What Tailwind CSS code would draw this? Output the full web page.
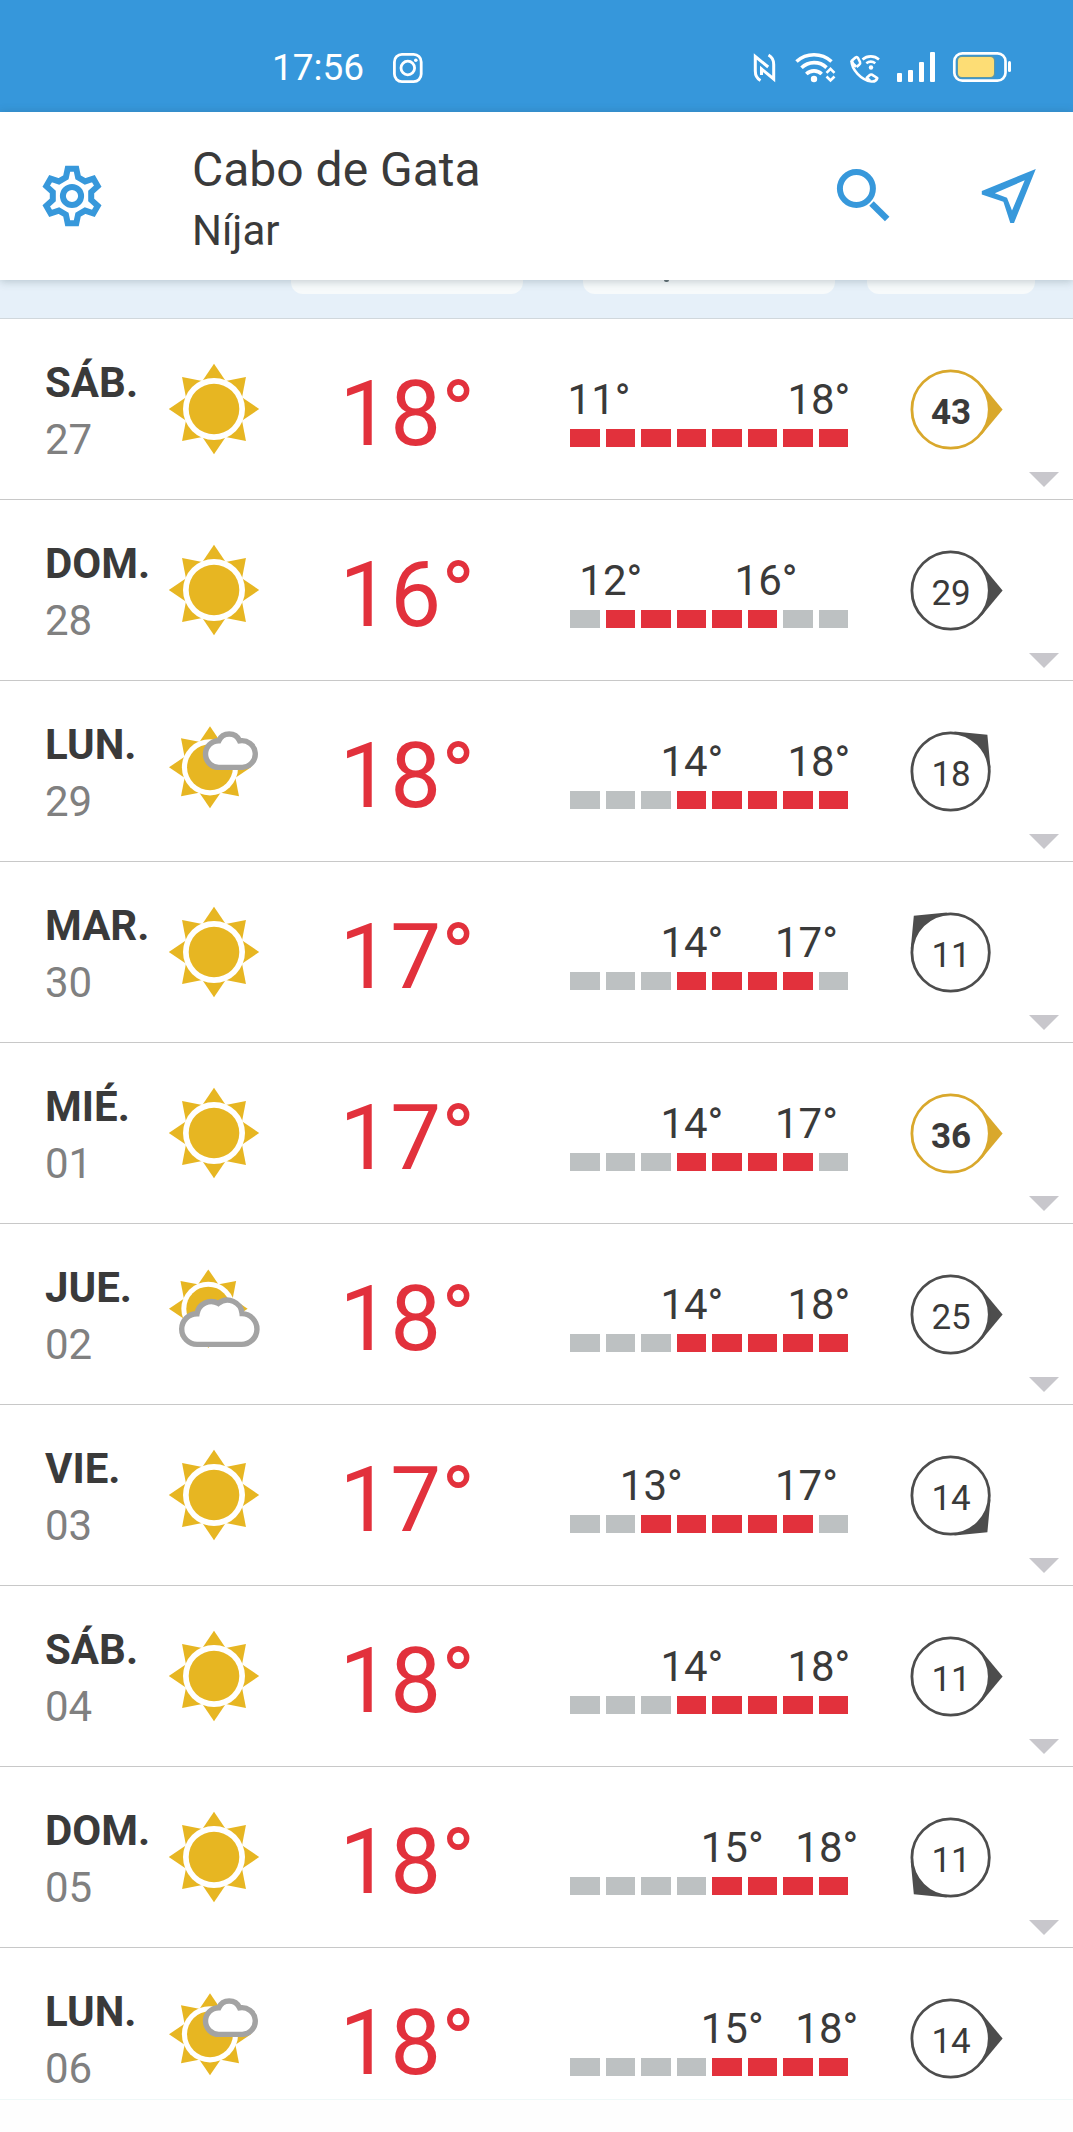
<!DOCTYPE html>
<html lang="es">
<head>
    <meta charset="UTF-8">
    <meta name="viewport" content="width=device-width, initial-scale=1.0">
    <title>Cabo de Gata</title>
    <script src="https://cdn.jsdelivr.net/npm/@tailwindcss/browser@4"></script>
</head>
<body class="bg-white font-['Roboto',sans-serif] text-[#3a3a3a]">
    <div class="relative w-[1073px] h-[2132px] overflow-hidden">
        <!-- Status bar -->
        <div class="flex items-start h-28 bg-[#3697db] pt-[50px] text-white">
            <div class="ml-[272px] w-[119px] text-[37px] leading-[36px]">17:56</div>
            <svg class="w-[34px] h-[34px]" viewBox="391 51 34 34" fill="none" stroke="currentColor" stroke-width="2.8">
                <rect x="394.4" y="55.4" width="26.8" height="27.2" rx="7.5" />
                <circle cx="407.8" cy="69" r="6.8" />
                <circle cx="415.8" cy="61.3" r="1.8" fill="currentColor" stroke="none" />
            </svg>
            <svg class="ml-[327px] w-[26px] h-[34px]" viewBox="752 50 26 34" fill="none" stroke="currentColor" stroke-width="3">
                <path d="M760.5 80.500c-3.300-1.800-5.200-5-5.200-9.500V56.500L768.200 67" />
                <path d="M768.500 55c3.300 1.800 5.200 5 5.200 9.500V79L761.500 69V75" />
            </svg>
            <svg class="ml-[15px] w-[44px] h-[34px]" viewBox="793 50 44 34" fill="none" stroke="currentColor" stroke-width="3.6">
                <path d="M796.5 61.5a26 26 0 0 1 35 0" />
                <path d="M801.5 67.8a18 18 0 0 1 25-.2" />
                <path d="M806.3 74a11 11 0 0 1 15.4 0" />
                <circle cx="814" cy="79" r="3.2" fill="currentColor" stroke="none" />
                <path stroke-width="2.6" d="M826.5 72.8l4-4 4 4M826.5 76.5l4 4 4-4" />
            </svg>
            <svg class="ml-[10px] w-[36px] h-[34px]" viewBox="847 50 36 34" fill="none" stroke="currentColor" stroke-width="2.6" stroke-linejoin="round">
                <path d="M851.5 61l4-3.500q1.500-1 2.500.500l2 4q.6 1.700-.8 2.700l-2.700 2.300" />
                <path d="M851.500 60.500c0 9 9.500 19.500 20 21 3 .3 5-1 5.800-3.500l-5-3.200q-1.500-.7-2.500.2l-3 2.700 3.200 3" />
                <path d="M851.500 60.500q1.500 4.500 4.700 6" />
                <path d="M862.5 59.5a12.5 12.5 0 0 1 16.5 0M866.3 63.3a7.5 7.500 0 0 1 9 0" />
                <circle cx="871" cy="67.5" r="2.2" fill="currentColor" stroke="none" />
            </svg>
            <svg class="ml-[12px] w-[42px] h-[34px]" viewBox="895 50 42 34" fill="currentColor">
                <rect x="897" y="73" width="5" height="9" rx="1" />
                <rect x="908" y="70" width="5" height="12" rx="1" />
                <rect x="919" y="62" width="5" height="20" rx="1" />
                <rect x="930" y="52" width="5" height="30" rx="1" />
            </svg>
            <svg class="ml-[14px] w-[62px] h-[34px]" viewBox="951 50 62 34">
                <rect x="954.3" y="53.3" width="51.2" height="27.4" rx="8" fill="none" stroke="currentColor" stroke-width="2.7" />
                <rect x="956.8" y="55.8" width="38.5" height="22.4" rx="4.5" fill="#5c98a8" />
                <rect x="958" y="57" width="36" height="20" rx="4" fill="#fddd75" />
                <rect x="1008" y="61" width="3" height="11" rx="1.5" fill="currentColor" />
            </svg>
        </div>

        <!-- Header -->
        <header class="relative z-10 flex h-[168px] bg-white text-[#3798db] shadow-[0_1px_9px_rgba(40,70,80,0.28)]">
            <svg class="ml-[41px] mt-[53px] w-[62px] h-[62px]" viewBox="-31 -31 62 62" fill="none" stroke="currentColor" stroke-width="6">
                <polygon points="-6.1,-18.6 -4.3,-27.2 4.3,-27.2 6.1,-18.6 13.1,-14.6 21.4,-17.3 25.7,-9.9 19.2,-4 19.2,4 25.7,9.9 21.4,17.3 13.1,14.6 6.1,18.6 4.3,27.2 -4.3,27.2 -6.1,18.6 -13.1,14.6 -21.4,17.3 -25.7,9.9 -19.2,4 -19.2,-4 -25.7,-9.9 -21.4,-17.3 -13.1,-14.6" />
                <circle r="9.1" />
            </svg>
            <div class="ml-[89px] w-[643px] pt-[34px] text-[#3a3a3a]">
                <h1 class="text-[48px] leading-[48px]">Cabo de Gata</h1>
                <p class="mt-4 text-[42px] leading-[42px]">Níjar</p>
            </div>
            <svg class="mt-[55px] w-[58px] h-[56px]" viewBox="835 167 58 56" fill="none" stroke="currentColor">
                <circle cx="856.4" cy="188.5" r="16.5" stroke-width="6" />
                <path d="M871.5 203.5L887.2 219" stroke-width="6.4" />
            </svg>
            <svg class="ml-[85px] mt-[55px] w-[60px] h-[58px]" viewBox="977 167 60 58" fill="currentColor" fill-rule="evenodd">
                <path d="M1034.8 169L980.8 191V194.5L1002.4 201.8L1009.3 223H1013ZM1023.7 180.3L993.8 193.3L1006 197.7L1011 210.5Z" />
            </svg>
        </header>

        <!-- Bottom edge of the cards scrolled under the header -->
        <div class="flex h-[39px] bg-[#e6f0f9] border-b border-[#d0d7dc]">
            <div class="ml-[291px] w-[232px] h-[14px] rounded-b-xl bg-[#f7fafb]"></div>
            <div class="ml-[60px] w-[252px] h-[14px] rounded-b-xl bg-[#f7fafb]">
                <div class="relative z-20 ml-[81px] w-[5px] h-[2px] rounded-b bg-[#3a4a50]/80"></div>
            </div>
            <div class="ml-[32px] w-[168px] h-[14px] rounded-b-xl bg-[#f7fafb]"></div>
        </div>

        <main id="days"></main>

        <!-- Navigation bar -->
        <div class="absolute inset-x-0 bottom-0 h-[33px] bg-[#fefefe] border-t border-[#eff8f8]"></div>
    </div>

    <script>
        // angle is the direction of the wind arrow, 0 points to the right
        const days = [
            { day: 'SÁB.', date: '27', icon: 'sun', temp: 18, min: 11, max: 18, minX: -2.4, maxX: 217.4, wind: 43, angle: 0, strong: true },
            { day: 'DOM.', date: '28', icon: 'sun', temp: 16, min: 12, max: 16, minX: 9.3, maxX: 164.6, wind: 29, angle: 0 },
            { day: 'LUN.', date: '29', icon: 'few', temp: 18, min: 14, max: 18, minX: 90.4, maxX: 217.4, wind: 18, angle: -45 },
            { day: 'MAR.', date: '30', icon: 'sun', temp: 17, min: 14, max: 17, minX: 90.4, maxX: 205, wind: 11, angle: -135 },
            { day: 'MIÉ.', date: '01', icon: 'sun', temp: 17, min: 14, max: 17, minX: 90.4, maxX: 205, wind: 36, angle: 0, strong: true },
            { day: 'JUE.', date: '02', icon: 'cloud', temp: 18, min: 14, max: 18, minX: 90.4, maxX: 217.4, wind: 25, angle: 0 },
            { day: 'VIE.', date: '03', icon: 'sun', temp: 17, min: 13, max: 17, minX: 49.8, maxX: 205, wind: 14, angle: 45 },
            { day: 'SÁB.', date: '04', icon: 'sun', temp: 18, min: 14, max: 18, minX: 90.4, maxX: 217.4, wind: 11, angle: 0 },
            { day: 'DOM.', date: '05', icon: 'sun', temp: 18, min: 15, max: 18, minX: 130.7, maxX: 225.3, wind: 11, angle: 135 },
            { day: 'LUN.', date: '06', icon: 'few', temp: 18, min: 15, max: 18, minX: 130.7, maxX: 225.3, wind: 14, angle: 0 },
        ];

        const rays = [0, 45, 90, 135, 180, 225, 270, 315]
            .map(a => `<path d="M0-45.200L13-26H-13Z" transform="rotate(${a})" />`).join('');
        const sun = `<g fill="#e7b622">${rays}<circle r="31" fill="#fff" /><circle r="25.3" /></g>`;
        const icons = {
            sun: sun,
            few: `<g transform="translate(-4 -3.7) scale(.907)">${sun}</g>
                <path fill="#fff" stroke="#a3a3a3" stroke-width="5.4" d="M4.8-3.6A13.3 13.3 0 0 1 4.8-30.2A11.4 11.4 0 0 1 25.6-30.2A13.4 13.4 0 1 1 28.3-3.6Z" />`,
            cloud: `<g transform="translate(-5.7 -5.3) scale(.87)">${sun}</g>
                <path fill="#fff" stroke="#a3a3a3" stroke-width="5.4" d="M-16.9 30.4A15.35 15.35 0 0 1-17-.3A14.5 14.5 0 0 1 4.3-10.6A14.7 14.7 0 0 1 28.1-.4A15.4 15.4 0 0 1 27 30.4Z" />`,
        };

        // One segment per degree, from 11 to 18
        function segments(d) {
            return [11, 12, 13, 14, 15, 16, 17, 18]
                .map(t => t >= d.min && t <= d.max ? '<i class="bg-[#e2313c]"></i>' : '<i class="bg-[#bdc1c2]"></i>')
                .join('');
        }

        function wind(d) {
            const color = d.strong ? '#d9a82c' : '#4d4d4d';
            return `<svg class="ml-[49px] mt-[36px] w-[108px] h-[108px]" viewBox="-53.6 -54.5 108 108">
                <path d="M52 0L30.8 25.6V-25.6Z" fill="${color}" transform="rotate(${d.angle})" />
                <circle r="38.7" fill="#fff" stroke="${color}" stroke-width="2.8" />
                <text x="0.5" y="14.2" text-anchor="middle" font-size="35" fill="#3a3a3a" font-weight="${d.strong ? 700 : 400}">${d.wind}</text>
            </svg>`;
        }

        document.getElementById('days').innerHTML = days.map(d => `
            <section class="relative flex h-[181px] pl-[45px] border-b border-[#c8c8c8]">
                <div class="w-[121px] pt-[43px] text-[42px] leading-[42px]">
                    <div class="font-bold">${d.day}</div>
                    <div class="mt-[15px] text-[#808080]">${d.date}</div>
                </div>
                <svg class="mt-[42px] w-24 h-24" viewBox="-48 -48 96 96">${icons[d.icon]}</svg>
                <div class="w-[308px] pt-[50px] pl-[77.5px] text-[90.5px] leading-[90px] text-[#e2313c]">${d.temp}°</div>
                <div class="w-[278px] pt-[60px]">
                    <div class="relative h-[42px] text-[42px] leading-[42px]">
                        <span class="absolute" style="left: ${d.minX}px">${d.min}°</span>
                        <span class="absolute" style="left: ${d.maxX}px">${d.max}°</span>
                    </div>
                    <div class="mt-2 grid grid-cols-8 gap-1.5 h-[18px]">${segments(d)}</div>
                </div>
                ${wind(d)}
                <svg class="ml-[24px] mt-[153px] w-[30px] h-[15px]" viewBox="0 0 30 15" fill="#c8c7cc"><path d="M0 0H30L15 15Z" /></svg>
            </section>`).join('');
    </script>
</body>
</html>
